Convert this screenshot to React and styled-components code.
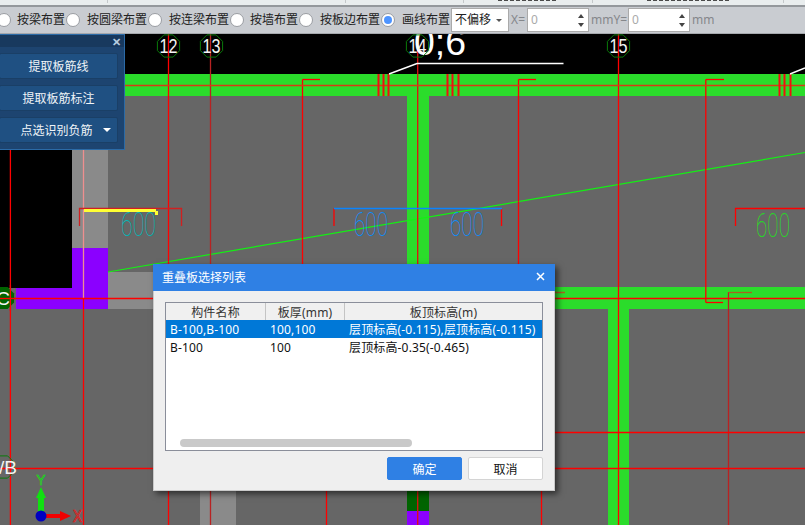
import React from 'react';
import styled, { createGlobalStyle } from 'styled-components';

const GlobalStyle = createGlobalStyle`
  html, body {
    margin: 0;
    padding: 0;
    overflow: hidden;
    background: #666;
    font-family: "Noto Sans", "Noto Sans CJK SC", sans-serif;
    font-size: 12px;
  }
  * { box-sizing: border-box; }
`;

const Page = styled.div`
  width: 805px;
  height: 525px;
  display: flex;
  flex-direction: column;
  overflow: hidden;
`;

const Ribbon = styled.div`
  height: 7px;
  flex: none;
  display: flex;
  background: #e9edee;
  border-bottom: 2px solid #94989c;
`;

const RibbonCell = styled.div`
  width: ${props => props.$w}px;
  height: 3px;
  flex: none;
  display: flex;
  justify-content: center;
  border-right: 1px solid #c4c8ca;
`;

const ClippedLabel = styled.span`
  width: ${props => props.$w}px;
  height: 1px;
  background: repeating-linear-gradient(90deg, #4a4a4a 0 4px, transparent 4px 6px);
`;

const Toolbar = styled.div`
  height: 27px;
  flex: none;
  display: flex;
  align-items: center;
  background: #c9ccd1;
  border-bottom: 1px solid #a5a8ad;
  color: #222;
  line-height: 1;
  white-space: nowrap;
`;

const Radio = styled.span`
  width: 14px;
  height: 14px;
  flex: none;
  margin-left: ${props => props.$ml || 0}px;
  border-radius: 50%;
  background: #fff;
  border: 1px solid #9a9da2;
  display: flex;
  align-items: center;
  justify-content: center;
  &::after {
    content: '';
    display: ${props => (props.$on ? 'block' : 'none')};
    width: 8px;
    height: 8px;
    border-radius: 50%;
    background: #4d94ff;
  }
`;

const RadioLabel = styled.span`
  margin-left: ${props => props.$ml}px;
  margin-right: 1px;
`;

const SelectBox = styled.div`
  width: 58px;
  height: 24px;
  flex: none;
  padding: 0 6px 0 3px;
  display: flex;
  align-items: center;
  justify-content: space-between;
  background: #fff;
  border: 1px solid #aaa;
  &::after {
    content: '';
    border-left: 3px solid transparent;
    border-right: 3px solid transparent;
    border-top: 3px solid #555;
  }
`;

const FieldLabel = styled.span`
  color: #85878b;
  flex: none;
  width: ${props => props.$w}px;
  margin-left: ${props => props.$ml || 0}px;
`;

const NumberBox = styled.div`
  width: 62px;
  height: 24px;
  flex: none;
  padding: 0 4px 0 3px;
  display: flex;
  align-items: center;
  justify-content: space-between;
  background: #fff;
  border: 1px solid #aaa;
  color: #aaa;
`;

const Spin = styled.span`
  display: flex;
  flex-direction: column;
  gap: 5px;
  &::before, &::after {
    content: '';
    display: block;
    border-left: 3px solid transparent;
    border-right: 3px solid transparent;
  }
  &::before { border-bottom: 4px solid #444; }
  &::after { border-top: 4px solid #444; }
`;

const Canvas = styled.div`
  position: relative;
  flex: 1;
  overflow: hidden;
  background: #666;
`;

const Drawing = styled.svg`
  display: block;
  width: 805px;
  height: 491px;
`;

const Panel = styled.div`
  position: absolute;
  left: -1px;
  top: 0;
  width: 126px;
  height: 116px;
  background: #1d4470;
  border: 1px solid #2b6aa6;
  border-left: none;
  color: #f0f4f8;
`;

const PanelTitle = styled.div`
  height: 12px;
  display: flex;
  align-items: center;
  justify-content: flex-end;
  padding-right: 3px;
  background: #18395e;
  color: #b9cde0;
  font-size: 11px;
  font-weight: 700;
  line-height: 1;
`;

const PanelList = styled.div`
  display: flex;
  flex-direction: column;
  gap: 6px;
  padding: 6px 6px 0 0;
`;

const PanelButton = styled.div`
  position: relative;
  height: 26px;
  display: flex;
  align-items: center;
  justify-content: center;
  background: #1f5082;
  border: 1px solid #1a3f66;
  border-radius: 2px;
  font-size: 12px;
  ${props => props.$menu && `
    padding-right: 4px;
    &::after {
      content: '';
      position: absolute;
      right: 6px;
      top: 10px;
      border-left: 4px solid transparent;
      border-right: 4px solid transparent;
      border-top: 4px solid #fff;
    }
  `}
`;

const Dialog = styled.div`
  position: absolute;
  left: 153px;
  top: 230px;
  width: 402px;
  height: 227px;
  display: flex;
  flex-direction: column;
  background: #efefef;
  border: 1px solid #c9c9c9;
  border-top: none;
  box-shadow: 3px 3px 6px rgba(0, 0, 0, 0.55);
`;

const DialogTitle = styled.div`
  height: 27px;
  flex: none;
  margin: 0 -1px;
  padding: 0 10px 2px 9px;
  display: flex;
  align-items: center;
  justify-content: space-between;
  background: #2f80e4;
  color: #fff;
`;

const CloseIcon = styled.svg`
  width: 9px;
  height: 9px;
`;

const DialogBody = styled.div`
  flex: 1;
  display: flex;
  flex-direction: column;
  padding: 11px 11px 10px 11px;
`;

const List = styled.div`
  height: 149px;
  display: flex;
  flex-direction: column;
  background: #fff;
  border: 1px solid #8a8e9a;
`;

const Row = styled.div`
  display: grid;
  grid-template-columns: 100px 79px 1fr;
  height: ${props => props.$h}px;
  flex: none;
  letter-spacing: 0.15px;
  background: ${props => (props.$active ? '#0078d7' : 'transparent')};
  color: ${props => (props.$active ? '#fff' : '#111')};
`;

const HeadCell = styled.div`
  display: flex;
  align-items: center;
  justify-content: center;
  background: #f0f0f0;
  color: #333;
  border-right: 1px solid #c4c4c4;
  border-bottom: 1px solid #c4c4c4;
  &:last-child { border-right: none; }
`;

const Cell = styled.div`
  display: flex;
  align-items: center;
  padding-left: 4px;
  white-space: nowrap;
`;

const Scroll = styled.div`
  margin: auto 0 3px 14px;
  width: 232px;
  height: 8px;
  flex: none;
  border-radius: 4px;
  background: #c9c9c9;
`;

const Actions = styled.div`
  display: flex;
  justify-content: flex-end;
  gap: 6px;
  margin-top: 6px;
`;

const ActionButton = styled.div`
  width: 75px;
  height: 23px;
  display: flex;
  align-items: center;
  justify-content: center;
  border-radius: 2px;
  background: ${props => (props.$primary ? '#2f80e4' : '#fff')};
  color: ${props => (props.$primary ? '#fff' : '#111')};
  border: 1px solid ${props => (props.$primary ? '#2f80e4' : '#d4d4d4')};
`;

const octagon = (cx, cy, r) =>
  Array.from({ length: 8 }, (_, i) => {
    const a = (Math.PI / 4) * i + Math.PI / 8;
    return `${(cx + r * Math.cos(a)).toFixed(1)},${(cy + r * Math.sin(a)).toFixed(1)}`;
  }).join(' ');

const RED = '#ff0000';
const DIM = '#b82222';
const GREEN = '#2bdc2b';

// [x1, y1, x2, y2, colour]
const redLines = [
  [10.4, 150, 10.4, 525, RED],
  [83.5, 150, 83.5, 298, '#ee8f8f'],
  [83.5, 298, 83.5, 525, RED],
  [168.5, 34, 168.5, 525, RED],
  [210.5, 34, 210.5, 525, DIM],
  [302.5, 79.5, 302.5, 300, RED],
  [302.5, 79.5, 320, 79.5, RED],
  [326.5, 480, 326.5, 525, RED],
  [417.7, 34, 417.7, 525, '#e01010'],
  [518.5, 79.5, 518.5, 300, RED],
  [518.5, 79.5, 536, 79.5, RED],
  [541.5, 480, 541.5, 525, RED],
  [618.5, 34, 618.5, 525, RED],
  [705.8, 79.5, 705.8, 302.5, RED],
  [705.8, 79.5, 724, 79.5, RED],
  [705.8, 302.5, 723, 302.5, RED],
  [728.5, 292, 728.5, 525, DIM],
  [728.5, 292.5, 752, 292.5, '#a8641c'],
  [530, 292.5, 565, 292.5, '#a8641c'],
  [0, 85.5, 805, 85.5, '#d83a14'],
  [0, 298.5, 805, 298.5, RED],
  [540, 432.5, 805, 432.5, RED],
  [0, 468.5, 805, 468.5, RED],
];

const bars = [378, 383, 388, 447, 452, 458, 779, 784, 790];
const bubbles = [
  ['12', 168, 46],
  ['13', 211, 46],
  ['14', 417, 46],
  ['15', 618, 46],
];
const dimLabels = [
  [121, 236, 35, '#00b8b8'],
  [354, 236, 34, '#0a8cff'],
  [450, 236, 34, '#0a8cff'],
  [756, 237, 34, '#1ee01e'],
];

const CadDrawing = () => (
  <Drawing viewBox="0 34 805 491">
    <rect x="0" y="34" width="805" height="40" fill="#000" />
    <rect x="0" y="150" width="72" height="138" fill="#000" />
    <rect x="72" y="150" width="36" height="98" fill="#8a8a8a" />
    <rect x="108" y="272" width="60" height="37" fill="#8a8a8a" />
    <rect x="200" y="480" width="36" height="45" fill="#8a8a8a" />
    <rect x="72" y="248" width="36" height="61" fill="#8b00ff" />
    <rect x="16" y="288" width="60" height="21" fill="#8b00ff" />
    <rect x="0" y="74" width="805" height="22" fill={GREEN} />
    <rect x="407" y="96" width="22" height="200" fill={GREEN} />
    <rect x="500" y="287" width="305" height="22" fill={GREEN} />
    <rect x="608" y="309" width="21" height="216" fill={GREEN} />
    <rect x="407" y="480" width="22" height="31" fill="#006400" />
    <rect x="407" y="511" width="22" height="14" fill="#8b00ff" />

    <line x1="108" y1="272" x2="805" y2="152.5" stroke="#14f014" strokeWidth="1.2" />

    {redLines.map(([x1, y1, x2, y2, c], i) => (
      <line key={i} x1={x1} y1={y1} x2={x2} y2={y2} stroke={c} strokeWidth="1.3" />
    ))}
    {bars.map(x => (
      <line key={x} x1={x + 0.5} y1="74" x2={x + 0.5} y2="96" stroke="#f01010" strokeWidth="2" />
    ))}

    <path d="M79.5 226V208.5H181.5V226" fill="none" stroke="#d02020" strokeWidth="1.3" />
    <line x1="84" y1="210.5" x2="156" y2="210.5" stroke="#ffff33" strokeWidth="3" />
    <rect x="155" y="211" width="3" height="4" fill="#ffff33" />
    <path d="M334 226V208.5" stroke={RED} strokeWidth="1.3" />
    <path d="M501.5 226V208.5" stroke={RED} strokeWidth="1.3" />
    <line x1="334" y1="208.5" x2="502" y2="208.5" stroke="#0a84ff" strokeWidth="1.3" />
    <path d="M735.5 226V208.5H805" fill="none" stroke={RED} strokeWidth="1.3" />

    {dimLabels.map(([x, y, w, c]) => (
      <text
        key={x}
        x={x}
        y={y}
        fontFamily="Roboto, Lato, sans-serif"
        fontWeight="100"
        fontSize="33"
        textLength={w}
        lengthAdjust="spacingAndGlyphs"
        fill={c}
      >
        600
      </text>
    ))}

    <text x="414" y="55" fontFamily="Liberation Sans, sans-serif" fontSize="36" textLength="52" lengthAdjust="spacingAndGlyphs" fill="#fff">
      0;6
    </text>
    <path d="M389 74L417 63.5H563.5" fill="none" stroke="#fff" strokeWidth="1.4" />
    <path d="M790 74L805 68" fill="none" stroke="#fff" strokeWidth="1.4" />

    {bubbles.map(([label, x, y]) => (
      <g key={label}>
        <polygon points={octagon(x + 0.5, y, 12)} fill="none" stroke="#0a7a0a" strokeWidth="1" />
        <text x={x + 0.5} y={y + 7} textAnchor="middle" fontFamily="Liberation Sans, sans-serif" fontSize="21" textLength="18" lengthAdjust="spacingAndGlyphs" fill="#f4f4f4">
          {label}
        </text>
      </g>
    ))}

    <polygon points={octagon(3, 298, 12)} fill="#006400" />
    <text x="3" y="305" textAnchor="middle" fontFamily="Liberation Sans, sans-serif" fontSize="19" fill="#f4f4f4">
      C
    </text>
    <line x1="0" y1="298.5" x2="16" y2="298.5" stroke={RED} strokeWidth="1.3" />
    <line x1="10.4" y1="285" x2="10.4" y2="311" stroke={RED} strokeWidth="1.3" />

    <polygon points={octagon(3, 467, 12)} fill="none" stroke="#0a7a0a" strokeWidth="1" />
    <text x="-1" y="474" fontFamily="Liberation Sans, sans-serif" fontSize="19" fill="#f4f4f4" textLength="18" lengthAdjust="spacingAndGlyphs">
      /B
    </text>

    <rect x="38" y="497" width="6" height="19" fill="#10e010" />
    <polygon points="41,487 46,498 36,498" fill="#10e010" />
    <rect x="44" y="514" width="17" height="4" fill="#f00000" />
    <polygon points="71,516 60,511 60,521" fill="#f00000" />
    <circle cx="41" cy="516" r="5.5" fill="#0000c0" />
    <text x="36.5" y="485" fontFamily="Liberation Sans, sans-serif" fontSize="15" textLength="9" lengthAdjust="spacingAndGlyphs" fill="none" stroke="#10e010" strokeWidth="0.7">
      Y
    </text>
    <text x="73" y="522" fontFamily="Liberation Sans, sans-serif" fontSize="16" textLength="9" lengthAdjust="spacingAndGlyphs" fill="none" stroke="#f01010" strokeWidth="0.7">
      X
    </text>
  </Drawing>
);

const layoutOptions = [
  { label: '按梁布置', gap: 6 },
  { label: '按圆梁布置', gap: 7 },
  { label: '按连梁布置', gap: 7 },
  { label: '按墙布置', gap: 6 },
  { label: '按板边布置', gap: 7, on: true },
];

const rows = [
  { name: 'B-100,B-100', thick: '100,100', top: '层顶标高(-0.115),层顶标高(-0.115)', active: true },
  { name: 'B-100', thick: '100', top: '层顶标高-0.35(-0.465)' },
];

const App = () => (
  <Page>
    <GlobalStyle />
    <Ribbon>
      <RibbonCell $w={108} />
      <RibbonCell $w={238} />
      <RibbonCell $w={118} />
      <RibbonCell $w={129}>
        <ClippedLabel $w={60} />
      </RibbonCell>
      <RibbonCell $w={191}>
        <ClippedLabel $w={82} />
      </RibbonCell>
    </Ribbon>
    <Toolbar>
      <Radio $ml={-3} />
      {layoutOptions.map(opt => (
        <React.Fragment key={opt.label}>
          <RadioLabel $ml={opt.gap}>{opt.label}</RadioLabel>
          <Radio $on={opt.on} />
        </React.Fragment>
      ))}
      <RadioLabel $ml={7}>画线布置</RadioLabel>
      <SelectBox>不偏移</SelectBox>
      <FieldLabel $ml={2} $w={16}>X=</FieldLabel>
      <NumberBox>
        0
        <Spin />
      </NumberBox>
      <FieldLabel $ml={2} $w={37}>mmY=</FieldLabel>
      <NumberBox>
        0
        <Spin />
      </NumberBox>
      <FieldLabel $ml={2} $w={24}>mm</FieldLabel>
    </Toolbar>
    <Canvas>
      <CadDrawing />
      <Panel>
        <PanelTitle>✕</PanelTitle>
        <PanelList>
          <PanelButton>提取板筋线</PanelButton>
          <PanelButton>提取板筋标注</PanelButton>
          <PanelButton $menu>点选识别负筋</PanelButton>
        </PanelList>
      </Panel>
      <Dialog>
        <DialogTitle>
          重叠板选择列表
          <CloseIcon viewBox="0 0 9 9">
            <path d="M1 1L8 8M8 1L1 8" stroke="#fff" strokeWidth="1.5" />
          </CloseIcon>
        </DialogTitle>
        <DialogBody>
          <List>
            <Row $h={17}>
              <HeadCell>构件名称</HeadCell>
              <HeadCell>板厚(mm)</HeadCell>
              <HeadCell>板顶标高(m)</HeadCell>
            </Row>
            {rows.map(row => (
              <Row key={row.top} $h={18} $active={row.active}>
                <Cell>{row.name}</Cell>
                <Cell>{row.thick}</Cell>
                <Cell>{row.top}</Cell>
              </Row>
            ))}
            <Scroll />
          </List>
          <Actions>
            <ActionButton $primary>确定</ActionButton>
            <ActionButton>取消</ActionButton>
          </Actions>
        </DialogBody>
      </Dialog>
    </Canvas>
  </Page>
);

export default App;
